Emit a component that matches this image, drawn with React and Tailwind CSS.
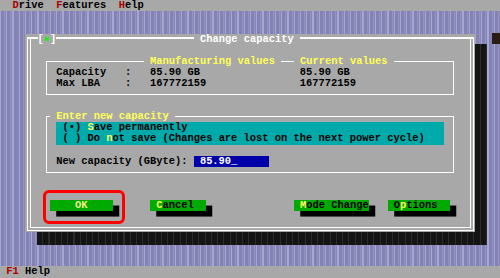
import React from "react";

// one text cell = 6.25px x 11.12px (80x25 screen)
const Hot = ({ children }) => <span className="text-[#ffff55]">{children}</span>;

function PushButton({ before = "", hot = "", after = "", width, text = "text-black" }) {
  return (
    <div
      className={`h-[11.12px] bg-[#00aa00] whitespace-pre shadow-[6.25px_5.56px_0_#000] ${text} ${width}`}
    >
      {before}
      {hot && <Hot>{hot}</Hot>}
      {after}
    </div>
  );
}

export default function App() {
  return (
    <div className="w-[500px] h-[278px] overflow-hidden flex flex-col bg-[#a8a8a8] text-black font-['Liberation_Mono',monospace] font-bold text-[10.42px] leading-[11.12px]">
      {/* menu bar */}
      <div className="h-[11px] whitespace-pre">
        {"  "}
        <span className="text-[#aa0000]">D</span>rive{"  "}
        <span className="text-[#aa0000]">F</span>eatures{"  "}
        <span className="text-[#aa0000]">H</span>elp
      </div>

      {/* desktop */}
      <div className="relative h-[255px] flex flex-col bg-[repeating-linear-gradient(90deg,#a6a6d2_0px,#a6a6d2_1px,#8282b6_1px,#8282b6_4px,#9494b4_4px,#9494b4_5px,#8686b8_5px,#8686b8_6.25px)]">
        <div className="absolute left-[492px] top-[22px] w-[8px] h-[11px] bg-[#2b1c13]" />

        <div className="relative ml-[25px] mt-[23px] w-[450px] h-[198px]">
          {/* drop shadow */}
          <div className="absolute left-[12px] top-[10px] w-[450px] h-[201px] bg-[repeating-linear-gradient(90deg,#141414_0px,#141414_5px,#2c2c2c_5px,#2c2c2c_6.25px)]" />

          <div className="relative h-full bg-[#a8a8a8] pt-[3px] pl-[2px] pr-[1px] pb-[1px]">
            <div className="relative h-full flex flex-col border-white border-t-2 border-x border-b">
              {/* title */}
              <div className="absolute left-[9.5px] top-[-5px] h-[11.12px] bg-[#a8a8a8] whitespace-pre text-white flex items-center">
                [<span className="inline-block w-[6.25px] h-[11px] relative"><span className="absolute left-[1.5px] top-[3px] w-[3.5px] h-[4px] bg-[#22ee22]" /></span>]
              </div>
              <div className="absolute left-[165.75px] top-[-5px] h-[11.12px] bg-[#a8a8a8] whitespace-pre text-white">
                {" Change capacity "}
              </div>

              <div className="flex-1 mx-[2px] mb-[2px] border-x border-b border-white flex flex-col">
                <div className="h-[22px]" />

                {/* manufacturing / current values */}
                <div className="relative ml-[15px] w-[408px] h-[34px] border border-white">
                  <div className="absolute left-[96.75px] top-[-6px] bg-[#a8a8a8] whitespace-pre text-[#ffff55]">
                    {" Manufacturing values "}
                  </div>
                  <div className="absolute left-[246.75px] top-[-6px] bg-[#a8a8a8] whitespace-pre text-[#ffff55]">
                    {" Current values "}
                  </div>
                  <div className="pt-[4.7px] pl-[9.25px] whitespace-pre">
                    <div>{"Capacity   :   85.90 GB                85.90 GB"}</div>
                    <div>{"Max LBA    :   167772159               167772159"}</div>
                  </div>
                </div>

                {/* enter new capacity */}
                <div className="relative mt-[21px] ml-[15px] w-[408px] h-[57px] border border-white">
                  <div className="absolute left-[3px] top-[-6px] bg-[#a8a8a8] whitespace-pre text-[#ffff55]">
                    {" Enter new capacity "}
                  </div>
                  <div className="mt-[5.3px] ml-[9.25px] w-[387.5px] h-[22.24px] bg-[#00aaaa] pl-[6.25px] whitespace-pre">
                    <div>
                      {"(•) "}
                      <Hot>S</Hot>
                      {"ave permanently"}
                    </div>
                    <div>
                      {"( ) Do "}
                      <Hot>n</Hot>
                      {"ot save (Changes are lost on the next power cycle)"}
                    </div>
                  </div>
                  <div className="h-[11.12px]" />
                  <div className="flex pl-[9.25px] whitespace-pre">
                    <span>{"New capacity (GByte): "}</span>
                    <span className="w-[75px] h-[11.12px] bg-[#0000aa] text-white">{" 85.90_"}</span>
                  </div>
                </div>

                {/* buttons */}
                <div className="flex mt-[27.2px] pl-[19px]">
                  <div className="relative">
                    <PushButton before="    OK    " width="w-[62.5px]" text="text-[#f0f08a]" />
                    <div className="absolute left-[-7px] top-[-10px] w-[82px] h-[34px] border-[3px] border-[#ff0000] rounded-[6px]" />
                  </div>
                  <div className="ml-[37.5px]">
                    <PushButton before=" " hot="C" after="ancel  " width="w-[56.25px]" />
                  </div>
                  <div className="ml-[87.5px]">
                    <PushButton before=" " hot="M" after="ode Change" width="w-[75px]" />
                  </div>
                  <div className="ml-[18.75px]">
                    <PushButton before=" O" hot="p" after="tions  " width="w-[62.5px]" />
                  </div>
                </div>
              </div>
            </div>
          </div>
        </div>
      </div>

      {/* status line */}
      <div className="h-[12px] whitespace-pre">
        {" "}
        <span className="text-[#aa0000]">F1</span> Help
      </div>
    </div>
  );
}
